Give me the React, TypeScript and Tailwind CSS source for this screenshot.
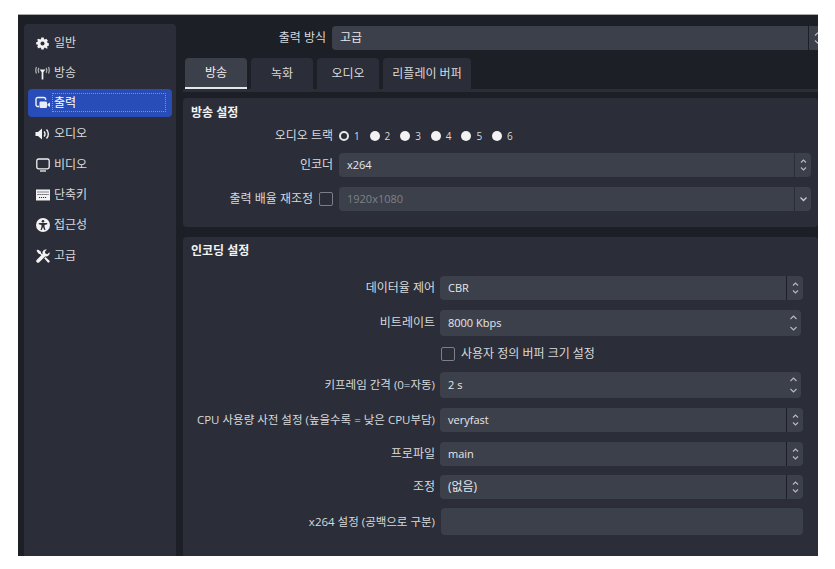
import React from 'react';

const font = { fontFamily: '"Open Sans", "Noto Sans CJK KR", sans-serif' };

const Updown = ({ big = false }: { big?: boolean }) => (
  <svg width="9" height={big ? 18 : 14} viewBox={big ? '0 0 9 18' : '0 0 9 14'} fill="none" stroke="#b9bbc2" strokeWidth="1.1">
    {big ? (
      <>
        <path d="M1.5 5 4.500 2l3 3" />
        <path d="M1.5 13l3 3 3-3" />
      </>
    ) : (
      <>
        <path d="M2 4.500 4.500 2 7 4.500" />
        <path d="M2 9.500 4.500 12 7 9.500" />
      </>
    )}
  </svg>
);

const Chevron = () => (
  <svg width="9" height="6" viewBox="0 0 9 6" fill="none" stroke="#c9cbd1" strokeWidth="1.3">
    <path d="M1.500 1.500 4.500 4.500l3-3" />
  </svg>
);

const GearIcon = () => (
  <svg width="13" height="13" viewBox="0 0 14 14" fill="#f2f2f2">
    <path fillRule="evenodd" d="M5.700 0.500h2.600l.3 1.700 1 .5L11 1.800l1.800 2-.9 1.400.4 1 1.500.5v2.600l-1.500.4-.4 1 .9 1.300L11 12.300l-1.400-.9-1 .5-.3 1.600H5.700l-.3-1.600-1-.5-1.400.9-1.800-1.900.9-1.300-.4-1L.2 8.200V5.700l1.500-.5.4-1-.9-1.400L3 1.800l1.400.9 1-.5zM7 4.800a2.200 2.200 0 1 0 0 4.400 2.200 2.200 0 0 0 0-4.400z" />
  </svg>
);

const AntennaIcon = () => (
  <svg width="15" height="14" viewBox="0 0 15 14" fill="none" stroke="#a9aab0" strokeWidth="1.300">
    <path d="M4.500 3.500h6L7.500 7z" fill="#f2f2f2" stroke="none" />
    <path d="M7.500 5v8.500" strokeWidth="1.700" stroke="#f2f2f2" />
    <path d="M3.800 1.800a5 5 0 0 0 0 5M11.200 1.800a5 5 0 0 1 0 5" />
    <path d="M1.500 1a8 8 0 0 0 0 6.500M13.500 1a8 8 0 0 1 0 6.500" />
  </svg>
);

const OutputIcon = () => (
  <svg width="15" height="14" viewBox="0 0 15 14" fill="none">
    <path d="M4 10.500H2.800A1.800 1.800 0 0 1 1 8.700V3.300A1.800 1.800 0 0 1 2.800 1.500h6A1.800 1.800 0 0 1 10.600 3.300V4" stroke="#f2f2f2" strokeWidth="1.400" />
    <rect x="4.500" y="5.500" width="7.500" height="6.500" rx="1.200" fill="#e8ecf8" />
    <path d="M12.500 8 15 6.500v4.500L12.500 9.500z" fill="#e8ecf8" />
  </svg>
);

const SpeakerIcon = () => (
  <svg width="15" height="14" viewBox="0 0 15 14" fill="none">
    <path d="M0.500 5h2.500L7 1.500v11L3 9H0.500z" fill="#f2f2f2" />
    <path d="M9 4.500a3.500 3.500 0 0 1 0 5M11.500 2.500a6.500 6.500 0 0 1 0 9" stroke="#f2f2f2" strokeWidth="1.400" />
  </svg>
);

const MonitorIcon = () => (
  <svg width="14" height="14" viewBox="0 0 14 14" fill="none" stroke="#f2f2f2" strokeWidth="1.300">
    <rect x="0.800" y="1" width="12.400" height="9.800" rx="1.800" />
    <path d="M4 13h6" />
  </svg>
);

const KeyboardIcon = () => (
  <svg width="14" height="12" viewBox="0 0 14 12" fill="none">
    <rect x="0" y="0.500" width="14" height="11" fill="#f2f2f2" />
    <path d="M1.500 3h11M1.500 5.500h11M3 8.500h8" stroke="#2b2e38" strokeWidth="1.100" strokeDasharray="1.100 0.900" />
  </svg>
);

const AccessIcon = () => (
  <svg width="14" height="14" viewBox="0 0 14 14">
    <circle cx="7" cy="7" r="7" fill="#f2f2f2" />
    <circle cx="7" cy="3.300" r="1.300" fill="#2b2e38" />
    <path d="M2.800 5h8.400v1.200L8.500 7v1.500l1 3.500H8.300L7 9l-1.300 3H4.500l1-3.500V7L2.800 6.200z" fill="#2b2e38" />
  </svg>
);

const ToolsIcon = () => (
  <svg width="14" height="14" viewBox="0 0 14 14" fill="#f2f2f2">
    <path d="M0.500 1.800 1.800.5l3 2 .2 1.400 3 3-1 1-3-3-1.400-.2z" />
    <path d="M13.500 3.200 11.300 5.200 9.400 4.600 8.800 2.700 10.800.5A3.500 3.500 0 0 0 6.600 4.900L.8 10.700a1.700 1.700 0 0 0 2.500 2.500l5.800-5.800a3.500 3.500 0 0 0 4.400-4.200z" />
    <path d="m8.200 9.300 1.200-1.200 3.900 3.500a1.200 1.200 0 0 1-1.700 1.700z" />
  </svg>
);

const navItems = [
  { label: '일반', icon: <GearIcon /> },
  { label: '방송', icon: <AntennaIcon /> },
  { label: '출력', icon: <OutputIcon />, active: true },
  { label: '오디오', icon: <SpeakerIcon /> },
  { label: '비디오', icon: <MonitorIcon /> },
  { label: '단축키', icon: <KeyboardIcon /> },
  { label: '접근성', icon: <AccessIcon /> },
  { label: '고급', icon: <ToolsIcon /> },
];

const Sidebar = () => (
  <aside className="w-[152px] shrink-0 mt-[9px] ml-[6px] bg-[#2b2e38] rounded-t px-[4px] pt-[4px] flex flex-col gap-[2.400px]">
    {navItems.map((item) => (
      <div
        key={item.label}
        className={`h-[28px] shrink-0 flex items-center rounded pl-[7px] ${item.active ? 'bg-[#284cb8] text-white' : 'pt-[2px] text-[#d8d9dc]'}`}
      >
        <span className="w-[15px] flex justify-center shrink-0">{item.icon}</span>
        {item.active ? (
          <span className="ml-[2px] w-[114px] h-[19px] border border-dotted border-[#a8935a] pl-[1px] leading-[17px]">{item.label}</span>
        ) : (
          <span className="ml-[4px]">{item.label}</span>
        )}
      </div>
    ))}
  </aside>
);

type SelectProps = {
  value: string;
  w: string;
  chevron?: boolean;
  disabled?: boolean;
  dark?: boolean;
  korean?: boolean;
};

const Select = ({ value, w, chevron = false, disabled = false, dark = false, korean = false }: SelectProps) => (
  <div className={`flex h-[24px] shrink-0 ${w}`}>
    <div className={`flex-1 bg-[#3c404b] rounded-l flex items-center pl-[8px] ${korean ? 'text-[12px]' : 'text-[11px]'} ${disabled ? 'text-[#7d8089]' : 'text-[#e6e7ea]'}`}>{value}</div>
    <div className={`w-px ${dark ? 'bg-[#1d1f26]' : 'bg-[#2b2e38]'}`} />
    <div className="w-[16px] bg-[#3c404b] rounded-r flex items-center justify-center">
      {chevron ? <Chevron /> : <Updown />}
    </div>
  </div>
);

const Spin = ({ value }: { value: string }) => (
  <div className="w-[361px] h-[26px] shrink-0 bg-[#3c404b] rounded flex items-center justify-between pl-[8px] pr-[3px] text-[11px] text-[#e6e7ea]">
    <span>{value}</span>
    <Updown big />
  </div>
);

const Check = () => <span className="block w-[14px] h-[14px] border border-[#7c7f87] rounded-[2px] shrink-0" />;

const Row = ({ label, children, className = '', small = false }: { label: string; children: React.ReactNode; className?: string; small?: boolean }) => (
  <div className={`flex items-center gap-[5px] ${className}`}>
    <div className={`w-[252px] text-right text-[#d8d9dc] whitespace-nowrap shrink-0 ${small ? 'text-[11.500px]' : 'text-[12px]'}`}>{label}</div>
    {children}
  </div>
);

const tabs = [
  { label: '방송', w: 'w-[62px]', active: true },
  { label: '녹화', w: 'w-[62px]' },
  { label: '오디오', w: 'w-[62px]' },
  { label: '리플레이 버퍼', w: 'w-[88px]' },
];

const tracks = ['1', '2', '3', '4', '5', '6'];

export default function App() {
  return (
    <div className="w-[835px] h-[569px] bg-white pt-[14px] pl-[18px] text-[12px] overflow-hidden" style={font}>
      <div className="w-[800px] h-[542px] bg-[#1d1f26] border-t border-[#a9a9a9] flex overflow-hidden">
        <Sidebar />

        <main className="w-[642px] shrink-0 pl-[7px] pt-[11px] overflow-hidden">
          <div className="flex items-center gap-[6px]">
            <div className="w-[143px] shrink-0 text-right text-[#d8d9dc]">출력 방식</div>
            <div className="flex h-[24px] w-[500px] shrink-0">
              <div className="w-[476px] bg-[#3c404b] rounded-l flex items-center pl-[8px] text-[#e6e7ea]">고급</div>
              <div className="w-px bg-[#1d1f26]" />
              <div className="w-[16px] bg-[#3c404b] flex items-center justify-center"><Updown /></div>
            </div>
          </div>

          <div className="mt-[8px] pl-[2px] flex gap-[4px] h-[31px]">
            {tabs.map((t) => (
              <div
                key={t.label}
                className={`${t.w} flex items-center justify-center rounded-t ${t.active ? 'bg-[#3c404b] border-b-2 border-[#e6e6e6] text-[#f2f2f2]' : 'bg-[#2b2e38] text-[#d8d9dc]'}`}
              >
                {t.label}
              </div>
            ))}
          </div>
          <div className="h-[3px] bg-[#2b2e38]" />

          <section className="mt-[6px] h-[129px] bg-[#2b2e38] rounded pl-[8px] pt-[7px]">
            <h3 className="font-bold text-[#f2f2f2] leading-[16px]">방송 설정</h3>
            <div className="mt-[7px] flex items-center h-[16px]">
              <div className="w-[142px] shrink-0 text-right text-[#d8d9dc]">오디오 트랙</div>
              <div className="ml-[6px] flex gap-[9.900px] items-center">
                {tracks.map((n, i) => (
                  <span key={n} className="flex items-center gap-[5px] text-[#d8d9dc] text-[10px]">
                    <span className={`w-[10px] h-[10px] rounded-full ${i === 0 ? 'border-[2.500px] border-[#e8e8e8]' : 'bg-[#f2f2f2]'}`} />
                    {n}
                  </span>
                ))}
              </div>
            </div>
            <div className="mt-[9px] flex items-center">
              <div className="w-[142px] shrink-0 text-right text-[#d8d9dc]">인코더</div>
              <div className="ml-[6px]"><Select value="x264" w="w-[472px]" /></div>
            </div>
            <div className="mt-[10px] flex items-center">
              <div className="w-[122px] shrink-0 text-right text-[#d8d9dc]">출력 배율 재조정</div>
              <div className="ml-[6px]"><Check /></div>
              <div className="ml-[6px]"><Select value="1920x1080" w="w-[472px]" chevron disabled /></div>
            </div>
          </section>

          <section className="mt-[10px] h-[319px] bg-[#2b2e38] rounded-t pt-[6px]">
            <h3 className="pl-[8px] font-bold text-[#f2f2f2] leading-[16px]">인코딩 설정</h3>
            <Row label="데이터율 제어" className="mt-[17px]"><Select value="CBR" w="w-[363px]" dark /></Row>
            <Row label="비트레이트" className="mt-[10px]"><Spin value="8000 Kbps" /></Row>
            <div className="mt-[10px] pl-[258px] flex items-center gap-[6px] h-[15px] text-[#d8d9dc]">
              <Check />
              <span>사용자 정의 버퍼 크기 설정</span>
            </div>
            <Row small label="키프레임 간격 (0=자동)" className="mt-[11px]"><Spin value="2 s" /></Row>
            <Row small label="CPU 사용량 사전 설정 (높을수록 = 낮은 CPU부담)" className="mt-[10px]"><Select value="veryfast" w="w-[363px]" dark /></Row>
            <Row label="프로파일" className="mt-[10px]"><Select value="main" w="w-[363px]" dark /></Row>
            <Row label="조정" className="mt-[9px]"><Select value="(없음)" w="w-[363px]" korean dark /></Row>
            <Row small label="x264 설정 (공백으로 구분)" className="mt-[9px]">
              <div className="w-[362px] h-[27px] bg-[#3c404b] rounded ml-px" />
            </Row>
          </section>
        </main>
      </div>
    </div>
  );
}
